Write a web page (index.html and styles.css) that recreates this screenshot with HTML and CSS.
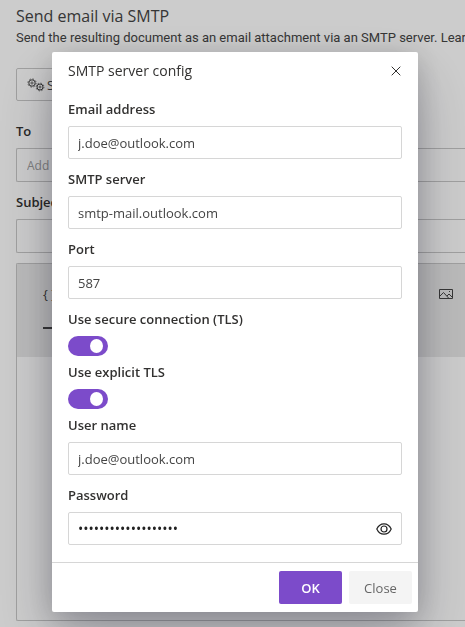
FILE: index.html
```html
<!DOCTYPE html>
<html lang="en">
<head>
    <meta charset="utf-8">
    <meta name="viewport" content="width=device-width, initial-scale=1">
    <title>Send email via SMTP</title>
    <link rel="stylesheet" href="styles.css">
</head>
<body>

<main class="page">
    <h1 class="page-title">Send email via SMTP</h1>
    <p class="page-description">Send the resulting document as an email attachment via an SMTP server. <a href="#">Learn more</a></p>

    <button class="config-button" type="button">
        <svg width="18" height="14" viewBox="0 0 18 14" fill="none" stroke="currentColor">
            <circle cx="5" cy="5" r="3.2"/>
            <circle cx="5" cy="5" r="4.1" stroke-width=".8" stroke-dasharray="1.6 1.62"/>
            <circle cx="5" cy="5" r="1.1" stroke-width=".8"/>
            <circle cx="13" cy="9" r="3"/>
            <circle cx="13" cy="9" r="3.9" stroke-width=".8" stroke-dasharray="1.5 1.56"/>
            <circle cx="13" cy="9" r="1" stroke-width=".8"/>
        </svg>
        SMTP
    </button>

    <label class="page-label" for="to">To</label>
    <input class="page-input page-input-to" id="to" type="text" placeholder="Add recipients">
    <label class="page-label" for="subject">Subject</label>
    <input class="page-input" id="subject" type="text">

    <div class="editor">
        <div class="toolbar">
            <button class="tool" type="button">{ }</button>
            <button class="tool" type="button" aria-label="Insert image">
                <svg width="14" height="12" viewBox="0 0 14 12" fill="none" stroke="currentColor">
                    <path d="M.5 1.5h13v9H.5z"/>
                    <path d="M1 8l3.5-3.5 5.5 6M8 8l2-2 3.5 3.5"/>
                    <path d="M10 3.5h1"/>
                </svg>
            </button>
            <button class="tool tool-line" type="button" aria-label="Horizontal line"><span></span></button>
        </div>
    </div>
</main>

<div class="overlay">
    <form class="modal" role="dialog" aria-labelledby="modalTitle">
        <header class="modal-header">
            <h2 class="modal-title" id="modalTitle">SMTP server config</h2>
            <button class="close-icon" type="button" aria-label="Dismiss">
                <svg width="10" height="10" viewBox="0 0 10 10" fill="none" stroke="currentColor">
                    <path d="M.7.7l8.6 8.6M9.3.7L.7 9.3"/>
                </svg>
            </button>
        </header>

        <div class="modal-body">
            <div class="field">
                <label for="email">Email address</label>
                <input class="text-input" id="email" type="text" value="j.doe@outlook.com">
            </div>
            <div class="field">
                <label for="server">SMTP server</label>
                <input class="text-input" id="server" type="text" value="smtp-mail.outlook.com">
            </div>
            <div class="field">
                <label for="port">Port</label>
                <input class="text-input" id="port" type="text" value="587">
            </div>
            <div class="field field-toggle">
                <label for="secure">Use secure connection (TLS)</label>
                <input class="toggle" id="secure" type="checkbox" role="switch" checked>
            </div>
            <div class="field field-toggle">
                <label for="explicit">Use explicit TLS</label>
                <input class="toggle" id="explicit" type="checkbox" role="switch" checked>
            </div>
            <div class="field">
                <label for="user">User name</label>
                <input class="text-input" id="user" type="text" value="j.doe@outlook.com">
            </div>
            <div class="field">
                <label for="password">Password</label>
                <div class="text-input password-box">
                    <input class="password-input" id="password" type="password" value="examplepassword1234">
                    <button class="reveal" type="button" aria-label="Show password">
                        <svg width="16" height="12" viewBox="0 0 16 12" fill="none" stroke="currentColor" stroke-width="1.2">
                            <path d="M.8 6C2.4 2.5 5 .8 8 .8S13.6 2.5 15.2 6C13.6 9.5 11 11.2 8 11.2S2.4 9.5.8 6z"/>
                            <circle cx="8" cy="6" r="3"/>
                        </svg>
                    </button>
                </div>
            </div>
        </div>

        <footer class="modal-footer">
            <button class="button button-primary" type="submit">OK</button>
            <button class="button" type="button">Close</button>
        </footer>
    </form>
</div>

</body>
</html>
```
FILE: styles.css
```css
* {
    box-sizing: border-box;
}
body {
    margin: 0;
    background-color: #fff;
    color: #323130;
    font-family: "Open Sans", "Noto Sans", sans-serif;
    font-size: 13px;
    line-height: 20px;
    overflow: hidden;
}
button, input {
    font: inherit;
    color: inherit;
}
button {
    padding: 0;
    border: none;
    background: none;
    cursor: pointer;
}
svg {
    display: block;
}

/* Page behind the dialog */
.page {
    display: flex;
    flex-direction: column;
    min-height: 100vh;
    padding: 4px 0 6px 16px;
    color: #444;
}
.page-title {
    margin: 0;
    font-size: 16px;
    font-weight: normal;
    line-height: 24px;
}
.page-description {
    margin: 0 0 20px;
    font-family: Roboto, "Open Sans", sans-serif;
    white-space: nowrap;
    overflow: hidden;
}
.page-description a {
    color: inherit;
    text-decoration: none;
}
.config-button {
    display: flex;
    align-items: center;
    align-self: flex-start;
    gap: 2px;
    height: 33px;
    padding: 0 10px;
    border: 1px solid #c8c8c8;
    border-radius: 2px;
}
.page-label {
    margin: 20px 0 7px;
    color: #323130;
    font-weight: 600;
}
.page-input {
    flex: none;
    width: 100%;
    height: 34px;
    padding: 0 10px;
    border: 1px solid #c8c8c8;
    border-right: none;
    border-radius: 2px 0 0 2px;
    background: none;
}
.page-input::placeholder {
    color: #a0a0a0;
    font-size: 12px;
}
.page-input-to + .page-label {
    margin: 10px 0 7px;
}
.editor {
    flex: 1;
    margin-top: 10px;
    border: 1px solid #c8c8c8;
    border-right: none;
    border-radius: 2px 0 0 2px;
}
.toolbar {
    display: grid;
    grid-template-columns: auto auto;
    justify-content: space-between;
    align-content: center;
    row-gap: 14px;
    height: 93px;
    padding: 0 12px 0 26px;
    background-color: #eaeaea;
}
.tool {
    justify-self: start;
    height: 20px;
}
.tool-line span {
    display: block;
    width: 14px;
    height: 2px;
    background-color: #444;
}

/* Dialog */
.overlay {
    position: fixed;
    inset: 0;
    padding: 52px 47px 0 52px;
    background-color: rgba(0, 0, 0, 0.2);
}
.modal {
    background-color: #fff;
    border-radius: 2px;
    box-shadow: 0 26px 58px rgba(0, 0, 30, 0.24), 0 5px 28px rgba(0, 0, 30, 0.18);
}
.modal-header {
    display: flex;
    align-items: center;
    justify-content: space-between;
    padding: 9px 16px 8px;
}
.modal-title {
    margin: 0;
    font-size: 14px;
    font-weight: 500;
}
.close-icon {
    padding: 1px;
}
.modal-body {
    display: flex;
    flex-direction: column;
    gap: 10px;
    padding: 10px 16px 17px;
}
.field {
    display: flex;
    flex-direction: column;
    gap: 7px;
}
.field-toggle {
    margin-bottom: -4px;
}
.field label {
    font-weight: 600;
}
.text-input {
    width: 100%;
    height: 33px;
    padding: 0 9px;
    border: 1px solid #d6d6d6;
    border-radius: 2px;
    background-color: #fff;
    color: #444;
}
.password-box {
    display: flex;
    align-items: center;
    color: #222;
}
.password-input {
    flex: 1;
    min-width: 0;
    padding: 0;
    border: none;
    outline: none;
    font-size: 14px;
}
.toggle {
    appearance: none;
    display: flex;
    align-items: center;
    width: 40px;
    height: 20px;
    margin: 0;
    padding: 0 5px;
    border-radius: 10px;
    background-color: #a0a0a0;
    cursor: pointer;
}
.toggle::before {
    content: "";
    width: 13px;
    height: 14px;
    border-radius: 50%;
    background-color: #fff;
}
.toggle:checked {
    justify-content: flex-end;
    background-color: #7c4bca;
}
.modal-footer {
    display: flex;
    justify-content: flex-end;
    gap: 7px;
    padding: 8px 6px;
    border-top: 1px solid #d6d6d6;
}
.button {
    min-width: 63px;
    height: 33px;
    border-radius: 2px;
    background-color: #f4f4f4;
    color: #666;
}
.button-primary {
    background-color: #7c4bca;
    color: #fff;
    font-weight: 600;
}
```
